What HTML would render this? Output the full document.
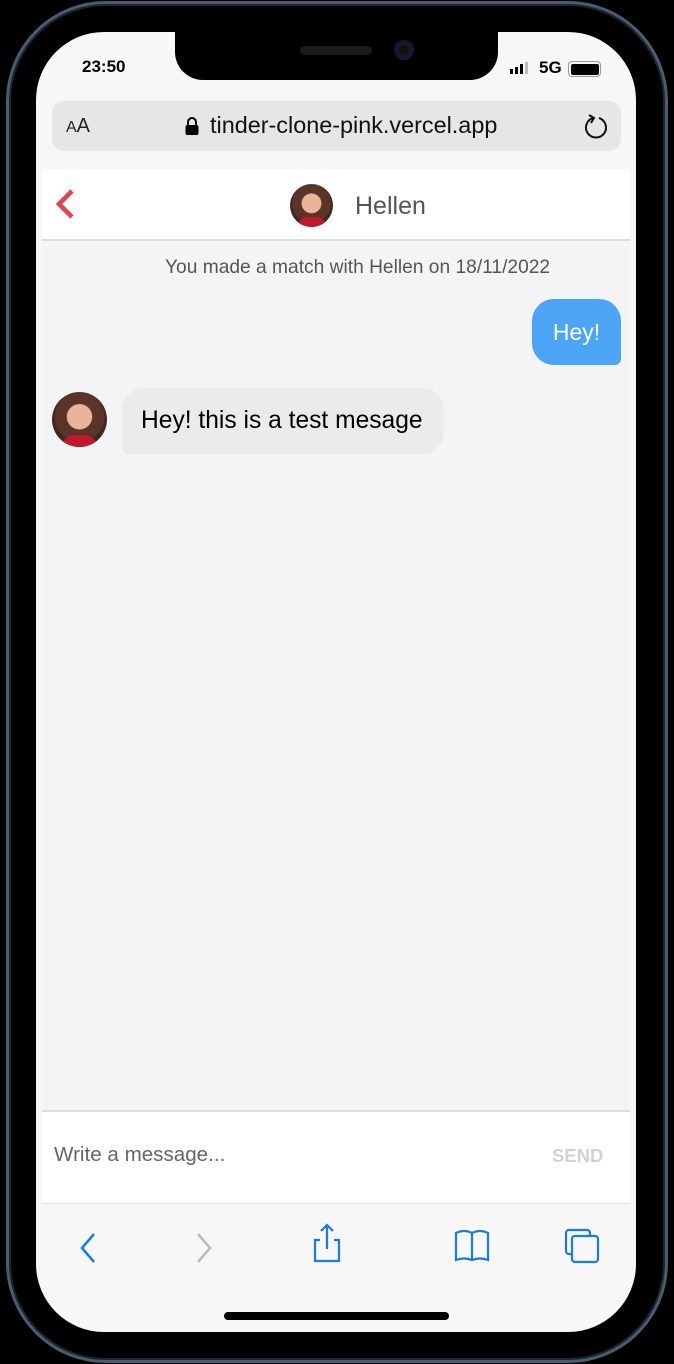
<!DOCTYPE html>
<html><head><meta charset="utf-8"><style>
*{margin:0;padding:0;box-sizing:border-box}
body{width:674px;height:1364px;background:#000;position:relative;overflow:hidden;font-family:"Liberation Sans",Helvetica,Arial,sans-serif}
.rim{position:absolute;left:6px;top:1px;width:662px;height:1362px;border-radius:100px;border:3px solid #4a5d6e;box-shadow:inset 0 0 0 2px #1a2630}
.screen{position:absolute;left:36px;top:32px;width:600px;height:1300px;border-radius:68px;background:#f7f7f7;overflow:hidden}
.notch{position:absolute;left:139px;top:0;width:323px;height:48px;background:#000;border-radius:0 0 28px 28px}
.abs{position:absolute;white-space:nowrap}
</style></head><body>
<div class="rim"></div>
<div class="screen">
  <div class="notch"></div>
  <div class="abs" style="left:264px;top:14px;width:72px;height:9px;border-radius:5px;background:#1b1b1b"></div>
  <div class="abs" style="left:358px;top:8px;width:20px;height:20px;border-radius:50%;background:#111;box-shadow:inset 0 0 0 5px #15192a"></div>
  <div class="abs" style="left:46px;top:25px;font-size:17px;font-weight:bold;color:#000">23:50</div>
  <div class="abs" style="left:474px;top:28px;display:flex;align-items:flex-end;gap:2px;height:14px">
    <span style="width:3px;height:5px;background:#000"></span><span style="width:3px;height:7px;background:#000"></span><span style="width:3px;height:10px;background:#000"></span><span style="width:3px;height:12px;background:#bbb"></span>
  </div>
  <div class="abs" style="left:503px;top:26px;font-size:17px;font-weight:bold">5G</div>
  <div class="abs" style="left:532px;top:29px;width:33px;height:16px;border:1.5px solid #999;border-radius:4px;padding:1.5px"><div style="width:100%;height:100%;background:#000;border-radius:2px"></div></div>
  <div class="abs" style="left:16px;top:69px;width:569px;height:50px;border-radius:12px;background:#e6e6e6"></div>
  <div class="abs" style="left:30px;top:83px;font-size:20px;color:#222"><span style="font-size:16px">A</span>A</div>
  <svg class="abs" style="left:148px;top:84px" width="16" height="20" viewBox="0 0 16 20"><path d="M4 9V6a4 4 0 0 1 8 0v3" fill="none" stroke="#000" stroke-width="2"/><rect x="1.5" y="9" width="13" height="10" rx="2" fill="#000"/></svg>
  <div class="abs" style="left:174px;top:80px;font-size:23.4px;color:#111">tinder-clone-pink.vercel.app</div>
  <svg class="abs" style="left:546px;top:80px" width="28" height="30" viewBox="0 0 28 30"><path d="M11 6a10 10 0 1 0 6 0" fill="none" stroke="#111" stroke-width="2"/><path d="M7 3l5 3-3 5" fill="none" stroke="#111" stroke-width="2"/></svg>
  <div class="abs" style="left:6px;top:137px;width:588px;height:943px;background:#f4f4f4"></div>
  <div class="abs" style="left:6px;top:137px;width:588px;height:72px;background:#fff;border-bottom:2px solid #ddd"></div>
  <svg class="abs" style="left:18px;top:156px" width="22" height="32" viewBox="0 0 22 32"><path d="M18 3L5 16l13 13" fill="none" stroke="#e8404f" stroke-width="4.5"/></svg>
  <div class="abs" style="left:254px;top:152px;width:43px;height:43px;border-radius:50%;background:radial-gradient(circle at 50% 45%,#e8b49a 0 30%,#5a3428 32% 60%,#3a2a24 62%);overflow:hidden"><div style="position:absolute;bottom:0;left:8px;width:28px;height:10px;background:#c0192a;border-radius:12px 12px 0 0"></div></div>
  <div class="abs" style="left:319px;top:160px;font-size:25px;color:#555">Hellen</div>
  <div class="abs" style="left:129px;top:225px;font-size:19.2px;color:#555">You made a match with Hellen on 18/11/2022</div>
  <div class="abs" style="left:496px;top:267px;width:89px;height:66px;border-radius:22px 22px 6px 22px;background:#4da5f8;color:#fff;font-size:23px;line-height:66px;text-align:center">Hey!</div>
  <div class="abs" style="left:16px;top:360px;width:55px;height:55px;border-radius:50%;background:radial-gradient(circle at 50% 45%,#e8b49a 0 30%,#5a3428 32% 60%,#3a2a24 62%);overflow:hidden"><div style="position:absolute;bottom:0;left:10px;width:35px;height:12px;background:#c0192a;border-radius:14px 14px 0 0"></div></div>
  <div class="abs" style="left:86px;top:356px;width:322px;height:66px;border-radius:22px 22px 22px 6px;background:#e9ebed;color:#000;font-size:24.6px;line-height:66px;padding-left:19px">Hey! this is a test mesage</div>
  <div class="abs" style="left:6px;top:1078px;width:588px;height:94px;background:#fff;border-top:2px solid #ddd;border-bottom:1px solid #e3e3e3"></div>
  <div class="abs" style="left:18px;top:1111px;font-size:20.6px;color:#666">Write a message...</div>
  <div class="abs" style="left:516px;top:1113px;font-size:18.5px;font-weight:bold;color:#d2d2d2">SEND</div>
  <svg class="abs" style="left:0;top:1190px" width="600" height="50" viewBox="0 0 600 50">
    <path d="M58 12L46 26l12 14" fill="none" stroke="#1a7ae6" stroke-width="2.5"/>
    <path d="M162 12l12 14-12 14" fill="none" stroke="#bbb" stroke-width="2.5"/>
    <path d="M284 18h-5v21h24V18h-5M291 3v24M285 9l6-6 6 6" fill="none" stroke="#1a7ae6" stroke-width="2.2"/>
    <path d="M420 38V11q8-4 16 0 8-4 16 0v27q-8-3-16 0-8-3-16 0zM436 11v27" fill="none" stroke="#1a7ae6" stroke-width="2.2"/>
    <rect x="530" y="8" width="24" height="24" rx="3" fill="none" stroke="#1a7ae6" stroke-width="2.2"/>
    <rect x="536" y="14" width="26" height="26" rx="3" fill="#f7f7f7" stroke="#1a7ae6" stroke-width="2.2"/>
  </svg>
  <div class="abs" style="left:188px;top:1280px;width:225px;height:8px;border-radius:4px;background:#000"></div>
</div>
</body></html>
